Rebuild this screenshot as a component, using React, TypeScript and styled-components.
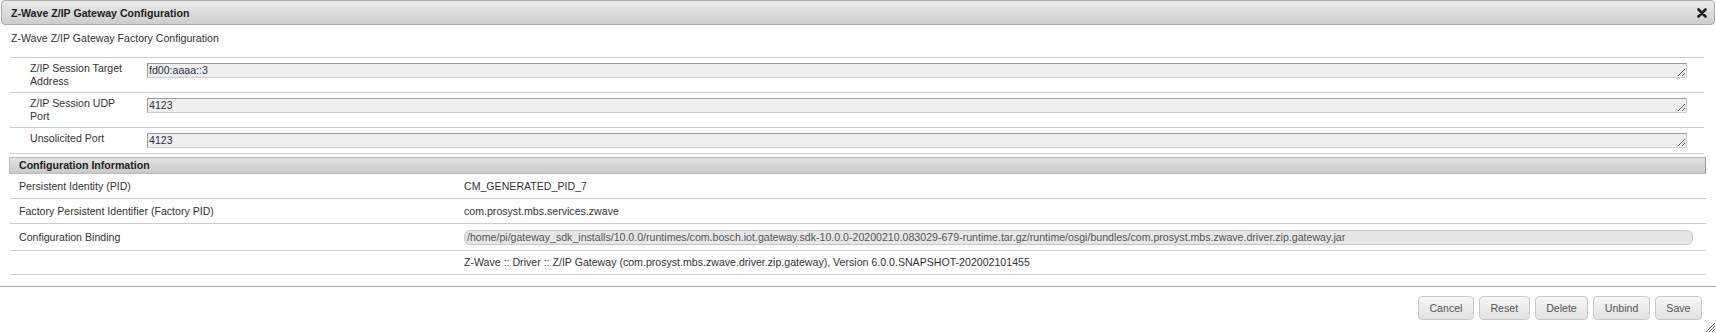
import styled, { createGlobalStyle } from "styled-components"
import React from "react"

const GlobalStyle = createGlobalStyle`
    html, body {
        margin: 0;
        padding: 0;
        background: #fff;
    }
    body {
        font-family: "Liberation Sans", Arial, sans-serif;
        font-size: 10.6px;
        color: #222;
    }
`

const fields = [
    { label: "Z/IP Session Target Address", value: "fd00:aaaa::3" },
    { label: "Z/IP Session UDP Port", value: "4123" },
    { label: "Unsolicited Port", value: "4123" }
]

const BINDING =
    "/home/pi/gateway_sdk_installs/10.0.0/runtimes/com.bosch.iot.gateway.sdk-10.0.0-20200210.083029-679-runtime.tar.gz/runtime/osgi/bundles/com.prosyst.mbs.zwave.driver.zip.gateway.jar"

const CloseIcon = () => (
    <svg width="10" height="10" viewBox="0 0 10 10">
        <path
            d="M1.5 1.5 L8.5 8.5 M8.5 1.5 L1.5 8.5"
            stroke="#1e1e1e"
            strokeWidth="2.6"
            strokeLinecap="round"
        />
    </svg>
)

const ResizeGrip = () => (
    <StyledGrip width="12" height="12" viewBox="0 0 12 12">
        <path d="M11 2 L2 11 M11 5 L5 11 M11 8 L8 11" stroke="#666" strokeWidth="1" />
    </StyledGrip>
)

const App = () => {
    return (
        <>
            <GlobalStyle />
            <Dialog>
                <TitleBar>
                    <span>Z-Wave Z/IP Gateway Configuration</span>
                    <CloseButton>
                        <CloseIcon />
                    </CloseButton>
                </TitleBar>
                <Content>
                    <Subtitle>Z-Wave Z/IP Gateway Factory Configuration</Subtitle>
                    <FieldTable>
                        {fields.map((f, i) => (
                            <FieldRow key={f.label} $last={i === fields.length - 1}>
                                <FieldLabel>{f.label}</FieldLabel>
                                <FieldCell>
                                    <FieldInput defaultValue={f.value} spellCheck={false} />
                                </FieldCell>
                            </FieldRow>
                        ))}
                    </FieldTable>
                    <SectionHeader>Configuration Information</SectionHeader>
                    <InfoTable>
                        <InfoRow>
                            <span>Persistent Identity (PID)</span>
                            <span>CM_GENERATED_PID_7</span>
                        </InfoRow>
                        <InfoRow>
                            <span>Factory Persistent Identifier (Factory PID)</span>
                            <span>com.prosyst.mbs.services.zwave</span>
                        </InfoRow>
                        <InfoRow>
                            <span>Configuration Binding</span>
                            <BindingInput>{BINDING}</BindingInput>
                        </InfoRow>
                        <InfoRow $tight>
                            <span></span>
                            <span>
                                Z-Wave :: Driver :: Z/IP Gateway (com.prosyst.mbs.zwave.driver.zip.gateway), Version
                                6.0.0.SNAPSHOT-202002101455
                            </span>
                        </InfoRow>
                    </InfoTable>
                </Content>
                <ButtonPane>
                    <Button>Cancel</Button>
                    <Button>Reset</Button>
                    <Button>Delete</Button>
                    <Button>Unbind</Button>
                    <Button>Save</Button>
                </ButtonPane>
                <ResizeGrip />
            </Dialog>
        </>
    )
}

const Dialog = styled.div`
    position: relative;
    width: 1716px;
    height: 333px;
    display: flex;
    flex-flow: column;
    overflow: hidden;
`

const TitleBar = styled.div`
    height: 23px;
    margin: 0 1px;
    padding: 0 7px 0 9px;
    border: 1px solid #aaa;
    border-radius: 4px;
    background: linear-gradient(#ebebeb, #cdcdcd);
    display: flex;
    align-items: center;
    justify-content: space-between;
    font-weight: bold;
    color: #222;
`

const CloseButton = styled.span`
    display: flex;
    width: 10px;
    height: 10px;
    margin-top: 1px;
`

const Content = styled.div`
    padding: 0 10px 0 9px;
`

const Subtitle = styled.div`
    padding: 7px 2px 12px;
    line-height: 13px;
    color: #333;
`

const FieldTable = styled.div`
    margin: 0 2px 0 1px;
    border-top: 1px solid #ccc;
`

const FieldRow = styled.div<{ $last?: boolean }>`
    display: grid;
    grid-template-columns: 117px 1fr;
    padding: 4px 17px ${(p) => (p.$last ? "3px" : "4px")} 20px;
    border-bottom: 1px solid #ccc;
`

const FieldLabel = styled.div`
    padding-right: 15px;
    line-height: 13px;
    color: #333;
`

const FieldCell = styled.div`
    min-height: 18px;
`

const FieldInput = styled.textarea`
    display: block;
    box-sizing: border-box;
    width: 100%;
    height: 15px;
    margin: 1px 0 0;
    padding: 0 1px;
    border: 1px solid #ccc;
    border-top-color: #999;
    border-left-color: #999;
    background: #efefef;
    font-family: "Liberation Sans", Arial, sans-serif;
    font-size: 10.6px;
    line-height: 13px;
    color: #2a3340;
    overflow: hidden;
    resize: vertical;
`

const SectionHeader = styled.div`
    margin-top: 3px;
    height: 15px;
    line-height: 15px;
    padding: 0 9px;
    border: 1px solid #bbb;
    border-right-color: #999;
    background: linear-gradient(#e2e2e2, #c9c9c9);
    font-weight: bold;
    color: #222;
`

const InfoTable = styled.div`
    margin: 0 0 0 1px;
`

const InfoRow = styled.div<{ $tight?: boolean }>`
    display: grid;
    grid-template-columns: 445px 1fr;
    align-items: center;
    min-height: 13px;
    padding: ${(p) => (p.$tight ? "5px 13px 5px 9px" : "6px 13px 5px 9px")};
    line-height: 13px;
    border-bottom: 1px solid #ccc;
    color: #333;
`

const BindingInput = styled.div`
    box-sizing: border-box;
    height: 15px;
    padding: 0 2px;
    border: 1px solid #c8c8c8;
    border-radius: 6px;
    background: #e6e6e6;
    color: #555;
    line-height: 13px;
    white-space: nowrap;
    overflow: hidden;
`

const ButtonPane = styled.div`
    margin-top: 11px;
    border-top: 1px solid #aaa;
    padding: 9px 14px 0 0;
    display: flex;
    justify-content: flex-end;
    gap: 5px;
`

const Button = styled.button`
    height: 24px;
    padding: 0 10.5px;
    border: 1px solid #c8c8c8;
    border-radius: 4px;
    background: linear-gradient(#f6f6f6, #e2e2e2);
    font-family: "Liberation Sans", Arial, sans-serif;
    font-size: 10.6px;
    color: #555;
    cursor: pointer;
`

const StyledGrip = styled.svg`
    position: absolute;
    right: 0;
    bottom: 0;
`

export default App
